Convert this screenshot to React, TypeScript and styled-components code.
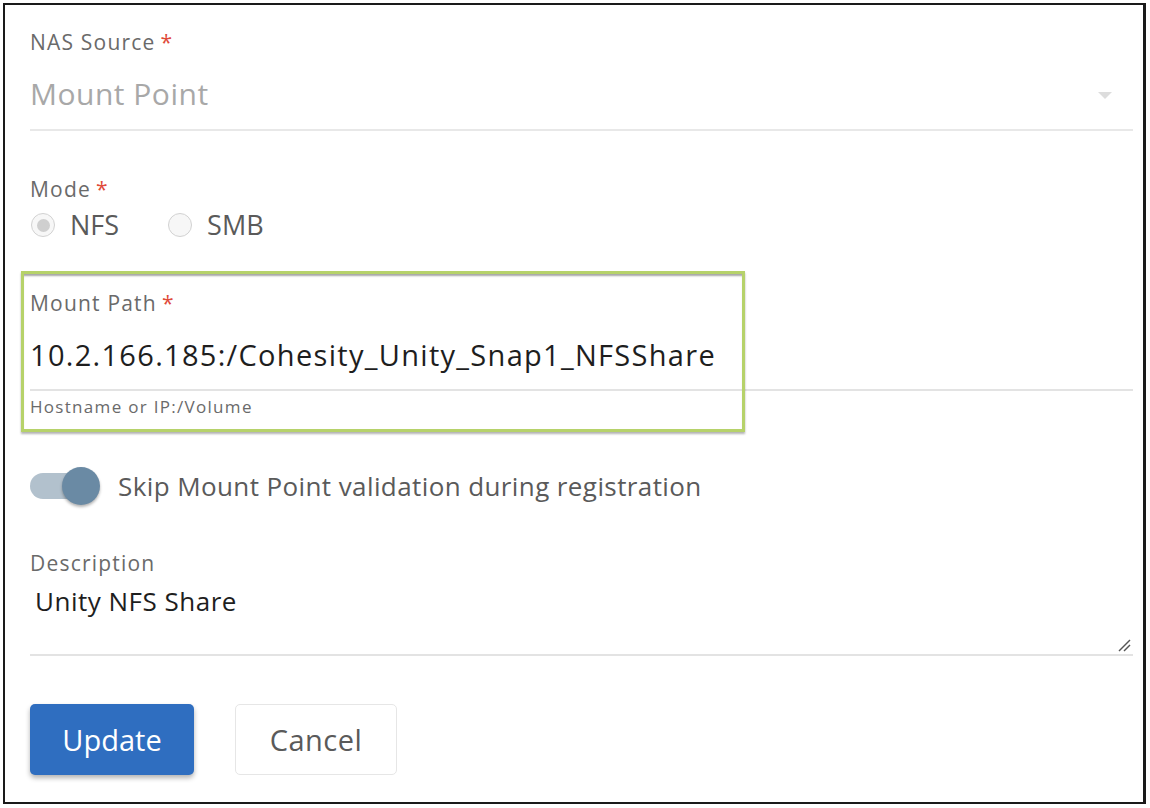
import React from "react";
import styled, { createGlobalStyle } from "styled-components";

const Global = createGlobalStyle`
  html, body { margin: 0; padding: 0; background: #fff; }
  body { font-family: "Open Sans", Lato, sans-serif; }
  * { box-sizing: border-box; }
`;

const Frame = styled.div`
  margin: 3px 0 0 3px;
  width: 1143px;
  height: 801px;
  border: 2px solid #1a1a1a;
  border-right-width: 3px;
  padding: 23px 10px 0 25px;
  display: flex;
  flex-direction: column;
`;

const Label = styled.div`
  font-size: 21px;
  line-height: 28px;
  letter-spacing: 1.2px;
  color: #6a6a6a;
`;

const Star = styled.span`
  color: #e04a3a;
  margin-left: 5px;
`;

const SelectRow = styled.div`
  display: flex;
  align-items: center;
  justify-content: space-between;
  margin-top: 18px;
  padding-bottom: 15px;
  border-bottom: 2px solid #e8e8e8;
  padding-right: 21px;
`;

const Placeholder = styled.span`
  font-size: 30px;
  line-height: 40px;
  letter-spacing: 0.5px;
  color: #a8a8a8;
`;

const Caret = styled.span`
  width: 0;
  height: 0;
  border-left: 7px solid transparent;
  border-right: 7px solid transparent;
  border-top: 7px solid #ddd;
  margin-top: 2px;
`;

const Field = styled.div<{ $top: number }>`
  margin-top: ${(p) => p.$top}px;
  position: relative;
`;

const RadioGroup = styled.div`
  display: flex;
  align-items: center;
  gap: 48px;
  margin-top: 4px;
`;

const RadioItem = styled.label`
  display: flex;
  align-items: center;
  gap: 15px;
  font-size: 27px;
  line-height: 36px;
  color: #5a5a5a;
`;

const RadioCircle = styled.span<{ $checked?: boolean }>`
  width: 24px;
  height: 24px;
  margin-left: 1px;
  border-radius: 50%;
  border: 1.5px solid #d2d2d2;
  background: #f7f7f7;
  display: flex;
  align-items: center;
  justify-content: center;
  &::after {
    content: "";
    width: 13px;
    height: 13px;
    border-radius: 50%;
    background: ${(p) => (p.$checked ? "#cfcfcf" : "transparent")};
  }
`;

const Highlight = styled.div`
  position: absolute;
  left: -9px;
  top: -18px;
  width: 724px;
  height: 161px;
  border: 3px solid #b6d26a;
  box-shadow: inset 0 3px 2px -1px rgba(0, 0, 0, 0.35), 0 2px 2px rgba(0, 0, 0, 0.3);
  pointer-events: none;
`;

const ValueRow = styled.div`
  padding-top: 19px;
  padding-bottom: 15px;
  border-bottom: 2px solid #e3e3e3;
`;

const Value = styled.span`
  font-size: 29px;
  line-height: 38px;
  letter-spacing: 1.3px;
  color: #1e1e1e;
  display: block;
`;

const Hint = styled.div`
  font-size: 17px;
  line-height: 22px;
  letter-spacing: 1.3px;
  color: #6a6a6a;
  margin-top: 5px;
`;

const ToggleRow = styled.div`
  display: flex;
  align-items: center;
  margin-top: 50px;
  height: 36px;
`;

const Track = styled.span`
  width: 58px;
  height: 26px;
  border-radius: 13px;
  background: #b2c1cd;
  position: relative;
  display: inline-block;
`;

const Thumb = styled.span`
  position: absolute;
  right: -12px;
  top: -6px;
  width: 38px;
  height: 38px;
  border-radius: 50%;
  background: #6a8aa4;
  box-shadow: 0 2px 3px rgba(0, 0, 0, 0.3);
`;

const ToggleText = styled.span`
  font-size: 26px;
  line-height: 36px;
  letter-spacing: 0.4px;
  color: #5a5a5a;
  margin-left: 30px;
`;

const TextArea = styled.div`
  position: relative;
  height: 79px;
  border-bottom: 2px solid #e3e3e3;
  padding: 6px 0 0 5px;
`;

const AreaText = styled.span`
  font-size: 26px;
  line-height: 36px;
  letter-spacing: 0.5px;
  color: #1e1e1e;
`;

const Resize = styled.svg`
  position: absolute;
  right: 2px;
  bottom: 2px;
`;

const Buttons = styled.div`
  display: flex;
  gap: 41px;
  margin-top: 48px;
`;

const Button = styled.button<{ $primary?: boolean }>`
  width: ${(p) => (p.$primary ? 164 : 162)}px;
  height: 71px;
  border-radius: 5px;
  font-family: "Open Sans", Lato, sans-serif;
  font-size: 29px;
  letter-spacing: ${(p) => (p.$primary ? 0 : 0.5)}px;
  cursor: pointer;
  background: ${(p) => (p.$primary ? "#2f6ec0" : "#fff")};
  color: ${(p) => (p.$primary ? "#fff" : "#5a5a5a")};
  border: ${(p) => (p.$primary ? "none" : "1.5px solid #e6e6e6")};
  box-shadow: ${(p) => (p.$primary ? "0 3px 5px rgba(0,0,0,0.3)" : "none")};
`;

export default function App() {
  return (
    <>
      <Global />
      <Frame>
        <Label>
          NAS Source<Star>*</Star>
        </Label>
        <SelectRow>
          <Placeholder>Mount Point</Placeholder>
          <Caret />
        </SelectRow>

        <Field $top={44}>
          <Label>
            Mode<Star>*</Star>
          </Label>
          <RadioGroup>
            <RadioItem>
              <RadioCircle $checked />
              NFS
            </RadioItem>
            <RadioItem>
              <RadioCircle />
              SMB
            </RadioItem>
          </RadioGroup>
        </Field>

        <Field $top={46}>
          <Highlight />
          <Label>
            Mount Path<Star>*</Star>
          </Label>
          <ValueRow>
            <Value>10.2.166.185:/Cohesity_Unity_Snap1_NFSShare</Value>
          </ValueRow>
          <Hint>Hostname or IP:/Volume</Hint>
        </Field>

        <ToggleRow>
          <Track>
            <Thumb />
          </Track>
          <ToggleText>Skip Mount Point validation during registration</ToggleText>
        </ToggleRow>

        <Field $top={45}>
          <Label>Description</Label>
          <TextArea>
            <AreaText>Unity NFS Share</AreaText>
            <Resize width="14" height="14" viewBox="0 0 14 14">
              <line x1="2" y1="13" x2="13" y2="2" stroke="#555" strokeWidth="1.5" />
              <line x1="7" y1="13" x2="13" y2="7" stroke="#555" strokeWidth="1.5" />
            </Resize>
          </TextArea>
        </Field>

        <Buttons>
          <Button $primary>Update</Button>
          <Button>Cancel</Button>
        </Buttons>
      </Frame>
    </>
  );
}
